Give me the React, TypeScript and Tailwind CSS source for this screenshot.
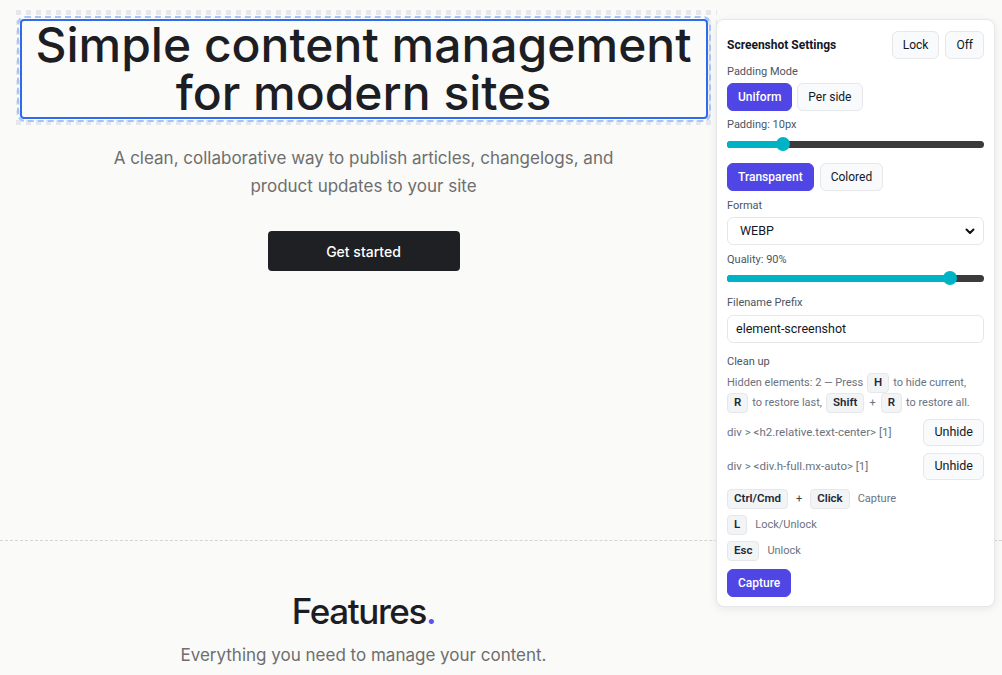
import React from "react";

const Kbd = ({ children }: { children: React.ReactNode }) => (
  <span className="inline-flex h-[20px] items-center rounded-[4px] border border-[#e5e7eb] bg-[#f3f4f6] px-[6px] text-[11.5px] font-semibold text-[#1f2937]">
    {children}
  </span>
);

const Btn = ({ children, active }: { children: React.ReactNode; active?: boolean }) => (
  <button
    className={
      active
        ? "h-[28px] rounded-[6px] border border-[#4f46e5] bg-[#4f46e5] px-[10px] text-[12px] font-medium text-white"
        : "h-[28px] rounded-[6px] border border-[#e5e7eb] bg-[#f9fafb] px-[10px] text-[12px] text-[#111827]"
    }
  >
    {children}
  </button>
);

function Panel() {
  return (
    <div className="absolute right-[7px] top-[19px] flex w-[279px] flex-col whitespace-nowrap rounded-[8px] border border-[#e5e7eb] bg-white px-[10px] pb-[9px] pt-[11px] text-[11px] text-[#4b5563] shadow-[0_2px_8px_rgba(0,0,0,0.08)] [font-family:Roboto,sans-serif]">
      <div className="flex items-center justify-between">
        <span className="text-[12px] font-bold text-[#111827]">Screenshot Settings</span>
        <div className="flex gap-[6px]">
          <Btn>Lock</Btn>
          <Btn>Off</Btn>
        </div>
      </div>
      <div className="mt-[5px] leading-[16px]">Padding Mode</div>
      <div className="mt-[3px] flex gap-[5px]">
        <Btn active>Uniform</Btn>
        <Btn>Per side</Btn>
      </div>
      <div className="mt-[6px] leading-[16px]">Padding: 10px</div>
      <div className="mt-[4px]">
        <div className="relative flex h-[14px] items-center">
          <div className="h-[7px] w-full rounded-full bg-[#3b3b3b]" />
          <div className="absolute left-0 h-[7px] w-[56px] rounded-l-full bg-[#00b3c4]" />
          <div className="absolute left-[49px] h-[14px] w-[14px] rounded-full bg-[#00b3c4]" />
        </div>
      </div>
      <div className="mt-[12px] flex gap-[6px]">
        <Btn active>Transparent</Btn>
        <Btn>Colored</Btn>
      </div>
      <div className="mt-[7px] leading-[16px]">Format</div>
      <div className="mt-[3px] flex h-[28px] items-center justify-between rounded-[6px] border border-[#e5e7eb] bg-white pl-[12px] pr-[7px] text-[12.5px] text-[#111827]">
        <span>WEBP</span>
        <svg width="12" height="12" viewBox="0 0 24 24" fill="none" stroke="#111" strokeWidth="4" strokeLinecap="round" strokeLinejoin="round">
          <path d="M5 9l7 7 7-7" />
        </svg>
      </div>
      <div className="mt-[7px] leading-[16px]">Quality: 90%</div>
      <div className="mt-[3px]">
        <div className="relative flex h-[14px] items-center">
          <div className="h-[7px] w-full rounded-full bg-[#3b3b3b]" />
          <div className="absolute left-0 h-[7px] w-[223px] rounded-l-full bg-[#00b3c4]" />
          <div className="absolute left-[216px] h-[14px] w-[14px] rounded-full bg-[#00b3c4]" />
        </div>
      </div>
      <div className="mt-[10px] leading-[16px]">Filename Prefix</div>
      <div className="mt-[4px] flex h-[28px] items-center rounded-[6px] border border-[#e5e7eb] bg-white px-[8px] text-[12.5px] text-[#111827]">
        element-screenshot
      </div>
      <div className="mt-[11px] leading-[16px]">Clean up</div>
      <div className="mt-[3px] flex flex-col text-[#6b7280]">
        <div className="flex h-[20px] items-center gap-[4px]">
          <span>Hidden elements: 2 — Press</span>
          <Kbd>H</Kbd>
          <span>to hide current,</span>
        </div>
        <div className="flex h-[20px] items-center gap-[4px]">
          <Kbd>R</Kbd>
          <span>to restore last,</span>
          <Kbd>Shift</Kbd>
          <span className="px-[1px]">+</span>
          <Kbd>R</Kbd>
          <span>to restore all.</span>
        </div>
      </div>
      <div className="mt-[6px] flex flex-col gap-[7px]">
        <div className="flex items-center justify-between">
          <span className="text-[11.5px] text-[#6b7280]">div &gt; &lt;h2.relative.text-center&gt; [1]</span>
          <button className="h-[27px] rounded-[6px] border border-[#e5e7eb] bg-[#f9fafb] px-[10px] text-[12.5px] text-[#111827]">Unhide</button>
        </div>
        <div className="flex items-center justify-between">
          <span className="text-[11.5px] text-[#6b7280]">div &gt; &lt;div.h-full.mx-auto&gt; [1]</span>
          <button className="h-[27px] rounded-[6px] border border-[#e5e7eb] bg-[#f9fafb] px-[10px] text-[12.5px] text-[#111827]">Unhide</button>
        </div>
      </div>
      <div className="mt-[9px] flex flex-col gap-[6px] text-[#6b7280]">
        <div className="flex items-center gap-[8px]">
          <Kbd>Ctrl/Cmd</Kbd>
          <span className="text-[#374151]">+</span>
          <Kbd>Click</Kbd>
          <span>Capture</span>
        </div>
        <div className="flex items-center gap-[8px]">
          <Kbd>L</Kbd>
          <span>Lock/Unlock</span>
        </div>
        <div className="flex items-center gap-[8px]">
          <Kbd>Esc</Kbd>
          <span>Unlock</span>
        </div>
      </div>
      <div className="mt-[8px]">
        <Btn active>Capture</Btn>
      </div>
    </div>
  );
}

export default function App() {
  return (
    <div className="relative h-[675px] w-[1002px] overflow-hidden bg-[#fafaf9] [font-family:Inter,sans-serif]">
      <div className="flex w-[727px] flex-col items-center pt-[10px]">
        <div className="w-[706px] bg-[conic-gradient(#e5e7eb_0_25%,transparent_0)] bg-[length:10px_10px] p-[9px]">
          <div className="rounded-[5px] bg-[#fafaf9] outline-2 outline-dashed outline-[#a5c4fb] outline-offset-[1px]">
            <h1 className="rounded-[4px] border-2 border-[#2f6bea] bg-[#fbfbfa] text-center text-[48px] font-medium leading-[48px] text-[#1d1d24]">
              Simple content management
              <br />
              for modern sites
            </h1>
          </div>
        </div>
        <p className="mt-[16px] max-w-[520px] text-center text-[17px] leading-[28px] text-[#6e6e6e]">
          A clean, collaborative way to publish articles, changelogs, and product updates to your site
        </p>
        <button className="mt-[31px] h-[40px] w-[192px] rounded-[4px] bg-[#1f2024] text-[14px] font-medium text-white">
          Get started
        </button>
      </div>
      <div className="mt-[269px] border-t border-dashed border-[#d4d4d4]" />
      <div className="flex w-[727px] flex-col items-center pt-[50px]">
        <h2 className="text-[35px] font-medium leading-[40px] tracking-[-0.04em] text-[#1d1d24]">
          Features<span className="text-[#5b4ff5]">.</span>
        </h2>
        <p className="mt-[12px] text-[17px] text-[#6e6e6e]">Everything you need to manage your content.</p>
      </div>
      <Panel />
    </div>
  );
}
